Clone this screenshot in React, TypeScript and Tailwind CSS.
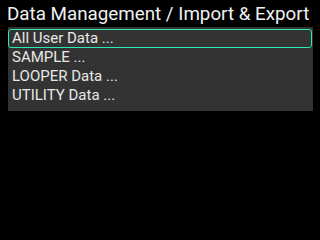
const items = ['All User Data ...', 'SAMPLE ...', 'LOOPER Data ...', 'UTILITY Data ...']

export default function App() {
  return (
    <div className="h-[240px] w-[320px] bg-black font-['Roboto',sans-serif] text-white">
      <div className="h-[27px] whitespace-nowrap pl-[7px] pt-[2px] text-[18.8px] leading-[24px] text-[#f0f0f0]">
        Data Management / Import &amp; Export
      </div>
      <div className="ml-[8px] h-[84px] w-[305px] bg-[#333333] pt-[2px]">
        {items.map((item, i) => (
          <div
            key={item}
            className={`flex h-[19px] w-[304px] items-center whitespace-nowrap text-[15px] text-[#e8e8e8] ${
              i === 0 ? 'rounded-[3px] border border-[#2ee8b6] pl-[3px]' : 'pl-[4px]'
            }`}
          >
            {item}
          </div>
        ))}
      </div>
    </div>
  )
}
